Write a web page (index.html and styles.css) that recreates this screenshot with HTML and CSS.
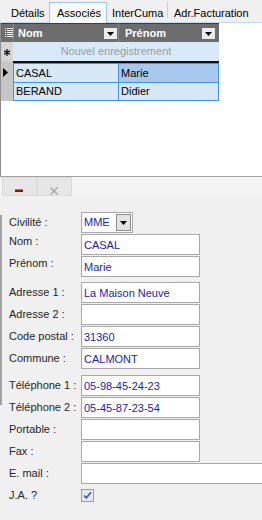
FILE: index.html
```html
<!DOCTYPE html>
<html lang="fr">
<head>
    <meta charset="UTF-8">
    <meta name="viewport" content="width=device-width, initial-scale=1.0">
    <title>Associés</title>
    <link rel="stylesheet" href="styles.css">
</head>
<body>

<div class="tabs">
    <div class="tab tab-details">Détails</div>
    <div class="tab tab-associes active">Associés</div>
    <div class="tab tab-intercuma">InterCuma</div>
    <div class="tab tab-adr">Adr.Facturation</div>
</div>

<div class="grid">
    <div class="grid-row grid-head">
        <div class="sel sel-head">
            <svg width="8" height="10" viewBox="0 0 8 10">
                <g fill="#fff">
                    <rect x="0" y="0" width="1" height="1"/><rect x="2" y="0" width="6" height="1"/>
                    <rect x="0" y="2" width="1" height="1"/><rect x="2" y="2" width="6" height="1"/>
                    <rect x="0" y="4" width="1" height="1"/><rect x="2" y="4" width="6" height="1"/>
                    <rect x="0" y="6" width="1" height="1"/><rect x="2" y="6" width="6" height="1"/>
                    <rect x="0" y="8" width="1" height="1"/><rect x="2" y="8" width="6" height="1"/>
                </g>
            </svg>
        </div>
        <div class="hcell col-nom">
            <span>Nom</span>
            <span class="hdrop"><svg width="7" height="4" viewBox="0 0 7 4"><polygon points="0,0 7,0 3.5,4" fill="#000"/></svg></span>
        </div>
        <div class="hcell col-prenom">
            <span>Prénom</span>
            <span class="hdrop"><svg width="7" height="4" viewBox="0 0 7 4"><polygon points="0,0 7,0 3.5,4" fill="#000"/></svg></span>
        </div>
    </div>
    <div class="grid-row grid-new">
        <div class="sel sel-new">
            <svg width="6" height="7" viewBox="0 0 6 7">
                <path d="M3 0 V7 M0 1.8 L6 5.2 M6 1.8 L0 5.2" stroke="#000" stroke-width="1.1" fill="none"/>
            </svg>
        </div>
        <div class="new-cell">Nouvel enregistrement</div>
    </div>
    <div class="grid-row grid-sep">
        <div class="sel"></div>
        <div class="sep-line"></div>
    </div>
    <div class="grid-row record">
        <div class="sel">
            <svg width="5" height="9" viewBox="0 0 5 9"><polygon points="0,0 5,4.5 0,9" fill="#000"/></svg>
        </div>
        <div class="cell col-nom">CASAL</div>
        <div class="cell col-prenom focus">Marie</div>
    </div>
    <div class="grid-row record last">
        <div class="sel"></div>
        <div class="cell col-nom">BERAND</div>
        <div class="cell col-prenom">Didier</div>
    </div>
</div>

<div class="toolbar">
    <button class="tbtn" type="button" title="Supprimer">
        <svg width="33" height="17" viewBox="0 0 33 17"><rect x="12" y="11.5" width="8" height="2.5" fill="#8e1010"/></svg>
    </button>
    <button class="tbtn" type="button" title="Annuler">
        <svg width="33" height="17" viewBox="0 0 33 17">
            <path d="M12.5 9.5 L19.5 16.5 M19.5 9.5 L12.5 16.5" stroke="#a3a3a3" stroke-width="1.2" fill="none"/>
        </svg>
    </button>
</div>

<form class="fiche">
    <div class="group">
        <div class="field">
            <label>Civilité :</label>
            <div class="combo">
                <span class="combo-val">MME</span>
                <span class="combo-btn"><svg width="7" height="4" viewBox="0 0 7 4"><polygon points="0,0 7,0 3.5,4" fill="#000"/></svg></span>
            </div>
        </div>
        <div class="field">
            <label class="raised">Nom :</label>
            <input class="box" type="text" value="CASAL" readonly>
        </div>
        <div class="field">
            <label class="raised">Prénom :</label>
            <input class="box" type="text" value="Marie" readonly>
        </div>
    </div>

    <div class="group group-adresse">
        <div class="field">
            <label>Adresse 1 :</label>
            <input class="box" type="text" value="La Maison Neuve" readonly>
        </div>
        <div class="field">
            <label>Adresse 2 :</label>
            <input class="box" type="text" value="" readonly>
        </div>
        <div class="field">
            <label>Code postal :</label>
            <input class="box" type="text" value="31360" readonly>
        </div>
        <div class="field">
            <label>Commune :</label>
            <input class="box" type="text" value="CALMONT" readonly>
        </div>
    </div>

    <div class="group group-contact">
        <div class="field">
            <label>Téléphone 1 :</label>
            <input class="box" type="text" value="05-98-45-24-23" readonly>
        </div>
        <div class="field">
            <label>Téléphone 2 :</label>
            <input class="box" type="text" value="05-45-87-23-54" readonly>
        </div>
        <div class="field">
            <label>Portable :</label>
            <input class="box" type="text" value="" readonly>
        </div>
        <div class="field">
            <label>Fax :</label>
            <input class="box" type="text" value="" readonly>
        </div>
        <div class="field">
            <label>E. mail :</label>
            <input class="box box-wide" type="text" value="" readonly>
        </div>
        <div class="field">
            <label>J.A. ?</label>
            <span class="check">
                <svg width="13" height="13" viewBox="0 0 13 13">
                    <rect x="0.5" y="0.5" width="12" height="12" fill="#e6e9f0" stroke="#9b9b9b"/>
                    <path d="M3 6.5 L5.3 9 L10 3.2" stroke="#3c5aa6" stroke-width="1.7" fill="none"/>
                </svg>
            </span>
        </div>
    </div>
</form>

</body>
</html>
```

FILE: styles.css
```css
html, body {
    overflow: hidden;
}
body {
    margin: 0;
    background-color: #f0f0f0;
    font-family: 'Liberation Sans', Arial, sans-serif;
    font-size: 11px;
    line-height: 13px;
    color: #000;
}

/* onglets */
.tabs {
    display: flex;
    height: 23px;
}
.tab {
    box-sizing: border-box;
    flex-shrink: 0;
    height: 23px;
    padding-top: 7px;
    white-space: nowrap;
    overflow: hidden;
    border-bottom: 1px solid #c4d9ee;
}
.tab-details {
    width: 49px;
    padding-left: 11px;
}
.tab.active {
    width: 58px;
    height: 21px;
    margin-top: 2px;
    padding-top: 4px;
    padding-left: 7px;
    background-color: #f9f9f9;
    border: 1px solid #9fc7ee;
    border-bottom: none;
}
.tab-intercuma {
    width: 61px;
    padding-left: 5px;
    background: linear-gradient(#cdcdcd, #cdcdcd) right 2px / 1px 16px no-repeat;
}
.tab-adr {
    flex: 1;
    padding-left: 6px;
}

/* grille */
.grid {
    box-sizing: border-box;
    height: 154px;
    background: #fff;
    border-left: 1px solid #8f8f8f;
    border-bottom: 1px solid #a2a2a2;
}
.grid-row {
    display: flex;
}
.sel {
    width: 12px;
    flex-shrink: 0;
    background-color: #c6c6c6;
    display: flex;
    align-items: center;
    padding-left: 2px;
    box-sizing: border-box;
}
.col-nom {
    width: 105px;
}
.col-prenom {
    width: 101px;
}
.grid-head {
    height: 19px;
}
.grid-head > div {
    box-sizing: border-box;
    background-color: #6d6d6d;
    border-top: 1px solid #3d3d3d;
}
.sel-head {
    padding-left: 4px;
}
.hcell {
    display: flex;
    align-items: center;
    justify-content: space-between;
    padding-left: 4px;
    padding-right: 1px;
    border-left: 1px solid #8a8a8a;
    color: #fff;
    font-weight: bold;
}
.hcell.col-prenom {
    padding-left: 6px;
    padding-right: 4px;
}
.hdrop {
    width: 13px;
    height: 11px;
    background-color: #ececec;
    display: flex;
    align-items: center;
    justify-content: center;
    margin-top: 1px;
}
.grid-new {
    height: 19px;
}
.sel-new {
    background-color: #d6d6d6;
    padding-left: 3px;
    padding-top: 2px;
}
.new-cell {
    width: 206px;
    background-color: #d8e9f9;
    color: #9b9b9b;
    text-align: center;
    line-height: 19px;
}
.grid-sep {
    height: 2px;
}
.sep-line {
    width: 206px;
    background-color: #111;
}
.record {
    height: 19px;
}
.cell {
    box-sizing: border-box;
    background-color: #d6e7f8;
    border: 1px solid #3f93e6;
    border-bottom: none;
    padding-left: 2px;
    line-height: 18px;
}
.cell.col-nom {
    border-right: none;
}
.cell.focus {
    background-color: #a8c7ee;
}
.record.last .cell {
    border-bottom: 1px solid #3f93e6;
    line-height: 17px;
}

/* barre d'outils */
.toolbar {
    display: flex;
    height: 19px;
    padding-left: 2px;
    margin-bottom: 16px;
    background-color: #f4f4f4;
}
.tbtn {
    width: 35px;
    height: 19px;
    padding: 0;
    margin: 0;
    border: 1px solid #dadada;
    background-color: #e6e6e6;
    display: flex;
}

/* fiche */
.fiche {
    margin: 0;
    padding-left: 9px;
    overflow: hidden;
    background: linear-gradient(#a3a3a3, #a3a3a3) 0 3px / 2px 190px no-repeat;
}
.group-adresse {
    margin-top: 5px;
}
.group-contact {
    margin-top: 6px;
}
.field {
    display: flex;
    align-items: center;
    height: 21px;
    margin-bottom: 1px;
}
.field label {
    width: 72px;
    flex-shrink: 0;
    color: #262626;
}
.field label.raised {
    align-self: flex-start;
    padding-top: 1px;
}
.box {
    box-sizing: border-box;
    width: 119px;
    height: 21px;
    margin: 0;
    padding: 0 2px;
    border: 1px solid #a8a8a8;
    background-color: #fff;
    font-family: inherit;
    font-size: 11px;
    color: #1d1d9e;
    outline: none;
}
.box-wide {
    width: 200px;
    flex-shrink: 0;
}
.combo {
    box-sizing: border-box;
    width: 52px;
    height: 21px;
    border: 1px solid #a8a8a8;
    background-color: #fff;
    display: flex;
    align-items: center;
    justify-content: space-between;
    padding: 0 1px 0 2px;
    color: #1d1d9e;
}
.combo-btn {
    box-sizing: border-box;
    width: 15px;
    height: 17px;
    background-color: #e3e3e3;
    border: 1px solid #8c8c8c;
    display: flex;
    align-items: center;
    justify-content: center;
}
.check {
    display: flex;
}
```
